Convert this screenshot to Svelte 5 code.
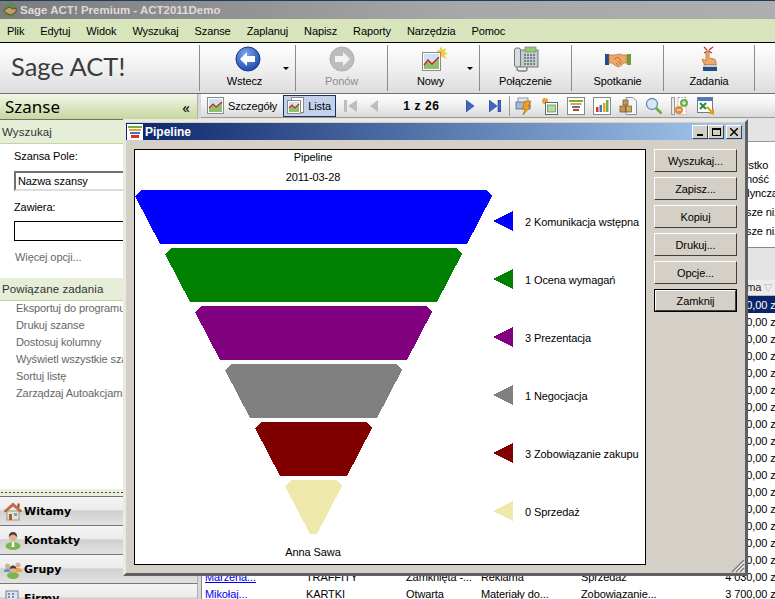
<script>
  const menu = ["Plik", "Edytuj", "Widok", "Wyszukaj", "Szanse", "Zaplanuj", "Napisz", "Raporty", "Narzędzia", "Pomoc"];
  const tasks = ["Eksportuj do programu", "Drukuj szanse", "Dostosuj kolumny", "Wyświetl wszystkie szanse", "Sortuj listę", "Zarządzaj Autoakcjami"];
  const dlgButtons = ["Wyszukaj...", "Zapisz...", "Kopiuj", "Drukuj...", "Opcje..."];

  // funnel stages, each band is 54px tall and narrows by 30px a side
  const stages = [
    { color: "#0000ff", label: "2 Komunikacja wstępna" },
    { color: "#008000", label: "1 Ocena wymagań" },
    { color: "#800080", label: "3 Prezentacja" },
    { color: "#808080", label: "1 Negocjacja" },
    { color: "#800000", label: "3 Zobowiązanie zakupu" },
    { color: "#eee8aa", label: "0 Sprzedaż" },
  ].map((s, i) => {
    const top = 40 + i * 58;
    const l = i * 30;
    const r = 357 - i * 30;
    const pts = [[l + 6, top], [r - 6, top], [r, top + 6], [r - 25, top + 54], [l + 25, top + 54], [l, top + 6]];
    return {
      ...s,
      points: pts.map((p) => p.join(",")).join(" "),
      y: top + 31,
      tri: `358,${top + 31} 378,${top + 21} 378,${top + 41}`,
    };
  });

  const amountRows = Array.from({ length: 16 }, (_, i) => i);
</script>

<div class="app">
  <div class="titlebar">
    <svg class="app-ico" width="16" height="16" viewBox="0 0 16 16">
      <circle cx="8" cy="8" r="7" fill="#5c8a5a" />
      <path d="M2 8 L7 5 L11 7 L14 6 L14 10 L9 13 L4 11 Z" fill="#c99a6a" stroke="#5a3a22" stroke-width=".8" />
    </svg>
    <span>Sage ACT! Premium - ACT2011Demo</span>
  </div>

  <nav class="menubar">
    {#each menu as m}<span>{m}</span>{/each}
  </nav>

  <div class="toolbar">
    <div class="logo"><span>Sage ACT!</span></div>
    <div class="tool has-drop wide">
      <svg width="26" height="26" viewBox="0 0 26 26">
        <defs>
          <radialGradient id="bl" cx=".4" cy=".3" r=".8"><stop offset="0" stop-color="#7fa8ec" /><stop offset="1" stop-color="#123fa8" /></radialGradient>
        </defs>
        <circle cx="13" cy="13" r="12" fill="url(#bl)" stroke="#1c3a88" />
        <path d="M5 13 L12 6 V10 H20 V16 H12 V20 Z" fill="#fff" />
      </svg>
      <span class="lbl">Wstecz</span><i class="drop"></i>
    </div>
    <div class="tool disabled">
      <svg width="26" height="26" viewBox="0 0 26 26">
        <circle cx="13" cy="13" r="12" fill="#bdbdbd" stroke="#adadad" />
        <path d="M21 13 L14 6 V10 H6 V16 H14 V20 Z" fill="#f2f2f2" />
      </svg>
      <span class="lbl">Ponów</span>
    </div>
    <div class="tool has-drop">
      <svg width="28" height="26" viewBox="0 0 28 26">
        <path d="M21 0 l1.500 4 4-2 -2 4 3.500 1.500 -3.500 1.500 2 4 -6-3 -4-5 3-1z" fill="#f4c93e" />
        <rect x="2.500" y="6.500" width="18" height="18" fill="#fff" stroke="#8a8a8a" />
        <rect x="4" y="8" width="15" height="15" fill="#cfe0f4" />
        <path d="M4 23 V19 L8 14 L12 18 L19 11 V23 Z" fill="#8dc06a" />
        <path d="M4 19 L8 14 L12 18 L19 11" fill="none" stroke="#d02020" stroke-width="1.300" />
      </svg>
      <span class="lbl">Nowy</span><i class="drop"></i>
    </div>
    <div class="tool">
      <svg width="26" height="26" viewBox="0 0 26 26">
        <rect x="7" y="4" width="18" height="17" fill="#c4ccd0" stroke="#707878" />
        <rect x="12" y="1" width="11" height="5" fill="#8fce6a" stroke="#707878" stroke-width=".6" />
        <rect x="1.500" y="2" width="6" height="19" rx="2" fill="#d8dcde" stroke="#707878" />
        <path d="M4 21 v2 q0 2 3 2 h5 q2 0 2-2 v-2" fill="none" stroke="#808080" stroke-width="1.400" />
        <path d="M11 9 h11 M11 12 h11 M11 15 h11 M11 18 h11" stroke="#606870" stroke-dasharray="2 1" stroke-width="1.500" />
      </svg>
      <span class="lbl">Połączenie</span>
    </div>
    <div class="tool">
      <svg width="26" height="26" viewBox="0 0 26 26">
        <rect x="0" y="8" width="4" height="11" fill="#1f4e8c" />
        <rect x="22" y="8" width="4" height="11" fill="#6f9a3e" />
        <path d="M4 9 L10 9 L14 8 L18 9 L22 9 V17 L19 17 L14 21 L11 20 L7 17 L4 17 Z" fill="#eda868" stroke="#b46a30" stroke-width=".7" />
        <path d="M9 13 l4-2 4 5 M11 17 l2 2 M13 15 l3 3" fill="none" stroke="#b46a30" stroke-width=".9" />
      </svg>
      <span class="lbl">Spotkanie</span>
    </div>
    <div class="tool">
      <svg width="26" height="26" viewBox="0 0 26 26">
        <path d="M11 4 L8 1 M13 4 L17 1 M12 5 L8 7 M12 5 L16 7" stroke="#c8282a" stroke-width="1.200" fill="none" />
        <path d="M10 5 h3 v7 l5 1 q2 .5 2 3 v3 H9 L6 14 l1-1 3 2 Z" fill="#eeaa66" stroke="#a8682e" stroke-width=".7" />
        <rect x="8" y="19" width="12" height="2" fill="#f0f0f0" stroke="#777" stroke-width=".5" />
        <rect x="7" y="21" width="14" height="4" fill="#1f4e8c" />
      </svg>
      <span class="lbl">Zadania</span>
    </div>
  </div>

  <div class="main">
    <aside class="side">
      <div class="side-head"><span>Szanse</span><b>«</b></div>
      <div class="sec-head">Wyszukaj</div>
      <div class="search">
        <label for="pole">Szansa Pole:</label>
        <div id="pole" class="select">Nazwa szansy</div>
        <label for="zaw">Zawiera:</label>
        <input id="zaw" class="input" />
        <span class="more">Więcej opcji...</span>
      </div>
      <div class="sec-head second">Powiązane zadania</div>
      <ul class="tasks">
        {#each tasks as t}<li>{t}</li>{/each}
      </ul>
      <div class="grip"></div>
      <div class="navs">
        <div class="nav">
          <svg width="20" height="20" viewBox="0 0 20 20">
            <path d="M1 10 L10 2 L19 10 L17 11 L10 5 L3 11 Z" fill="#c8733a" stroke="#8a4a20" stroke-width=".6" />
            <rect x="4" y="10" width="12" height="9" fill="#e8e2d0" stroke="#807868" stroke-width=".7" />
            <rect x="6" y="13" width="3" height="6" fill="#a0622e" />
            <rect x="11" y="12" width="3" height="3" fill="#7aa0cc" />
            <rect x="14.500" y="2.500" width="2" height="4" fill="#b83020" />
          </svg>
          <span>Witamy</span>
        </div>
        <div class="nav">
          <svg width="20" height="20" viewBox="0 0 20 20">
            <ellipse cx="10" cy="16" rx="7.500" ry="4" fill="#7ab648" />
            <circle cx="10" cy="7" r="4.200" fill="#e0b48c" />
            <path d="M5.800 7 Q6 2 10 2 Q14 2 14.200 7 Q12 4.500 10 4.500 Q8 4.500 5.800 7Z" fill="#4a4038" />
            <path d="M9 12 h2 l.5 5 h-3z" fill="#fff" />
          </svg>
          <span>Kontakty</span>
        </div>
        <div class="nav">
          <svg width="20" height="20" viewBox="0 0 20 20">
            <circle cx="4.500" cy="7" r="2.500" fill="#d8b090" />
            <path d="M1 13 q0-3.500 3.500-3.500 q3.500 0 3.500 3.500z" fill="#5f94d8" />
            <circle cx="15" cy="6" r="2.500" fill="#d8b090" />
            <path d="M11 13 q0-4 4-4 q4 0 4 4z" fill="#f0a040" />
            <ellipse cx="10" cy="16.500" rx="6" ry="3.500" fill="#7ab648" />
            <circle cx="10" cy="10" r="3.500" fill="#e0b48c" />
            <path d="M6.500 10 Q7 6.500 10 6.500 Q13 6.500 13.500 10 Q11 8.500 6.500 10Z" fill="#4a4038" />
          </svg>
          <span>Grupy</span>
        </div>
        <div class="nav">
          <svg width="20" height="20" viewBox="0 0 20 20">
            <rect x="3" y="3" width="12" height="14" fill="#dde4f0" stroke="#76808e" />
            <path d="M5 6h2M9 6h2M5 9h2M9 9h2M5 12h2M9 12h2" stroke="#5c7294" stroke-width="1.500" />
          </svg>
          <span>Firmy</span>
        </div>
      </div>
    </aside>

    <section class="content">
      <div class="subbar">
        <div class="sub-btn">
          <svg width="17" height="17" viewBox="0 0 17 17">
            <rect x=".5" y=".5" width="16" height="16" fill="#fff" stroke="#8a8a8a" />
            <rect x="2" y="2" width="13" height="13" fill="#cfe0f4" />
            <path d="M2 15 V11 L6 7 L9 10 L15 5 V15 Z" fill="#8dc06a" />
            <path d="M2 11 L6 7 L9 10 L15 5" fill="none" stroke="#d02020" stroke-width="1.200" />
          </svg>
          <span>Szczegóły</span>
        </div>
        <div class="sub-btn active">
          <svg width="17" height="17" viewBox="0 0 17 17">
            <rect x="4.500" y=".5" width="12" height="15" fill="#fff" stroke="#8a8a8a" />
            <rect x=".5" y="3.500" width="13" height="13" fill="#fff" stroke="#8a8a8a" />
            <rect x="2" y="5" width="10" height="10" fill="#cfe0f4" />
            <path d="M2 15 V11 L5 8 L8 11 L12 7 V15 Z" fill="#8dc06a" />
            <path d="M2 11 L5 8 L8 11 L12 7" fill="none" stroke="#d02020" stroke-width="1.200" />
          </svg>
          <span>Lista</span>
        </div>
        <div class="pager">
          <svg width="13" height="12" viewBox="0 0 13 12"><path d="M0 0h3v12H0zM13 0v12L4 6z" fill="#bdbdbd" /></svg>
          <svg class="prev" width="8" height="12" viewBox="0 0 8 12"><path d="M8 0v12L0 6z" fill="#bdbdbd" /></svg>
          <b>1 z 26</b>
          <svg class="next" width="8" height="12" viewBox="0 0 8 12"><path d="M0 0v12l8-6z" fill="#3d68c4" stroke="#1c3a88" stroke-width=".6" /></svg>
          <svg width="12" height="12" viewBox="0 0 12 12"><path d="M0 0v12l8-6zM9 0h3v12H9z" fill="#3d68c4" stroke="#1c3a88" stroke-width=".6" /></svg>
        </div>
        <div class="icons">
          <svg width="18" height="18" viewBox="0 0 18 18">
            <rect x="3" y="1" width="10" height="5" fill="#e4e8ee" stroke="#7a8494" stroke-width=".8" />
            <rect x="1" y="5" width="14" height="7" fill="#a8b8d0" stroke="#5a6a84" stroke-width=".8" />
            <path d="M10 4 h6 l-3 5 h3 l-8 9 2-6 h-3z" fill="#f0a020" stroke="#a06010" stroke-width=".6" />
          </svg>
          <svg width="18" height="18" viewBox="0 0 18 18">
            <circle cx="4" cy="4" r="3" fill="#f0a030" />
            <rect x="4.500" y="5.500" width="12" height="12" fill="#fff" stroke="#5a6a70" />
            <rect x="6.500" y="8" width="8" height="7" fill="#b8d8a0" stroke="#4a8a30" stroke-width=".7" />
          </svg>
          <svg width="18" height="18" viewBox="0 0 18 18">
            <rect x=".5" y=".5" width="17" height="17" fill="#fff" stroke="#8a8a8a" />
            <rect x="2" y="3" width="14" height="2" fill="#6fae4a" />
            <rect x="3.500" y="6" width="11" height="2" fill="#f0a020" />
            <rect x="5" y="9" width="8" height="2" fill="#3c78c8" />
            <rect x="6" y="12" width="6" height="2" fill="#e03020" />
          </svg>
          <svg width="18" height="18" viewBox="0 0 18 18">
            <rect x=".5" y=".5" width="17" height="17" fill="#fff" stroke="#8a8a8a" />
            <rect x="3" y="10" width="2.500" height="5" fill="#e03020" />
            <rect x="6.500" y="8" width="2.500" height="7" fill="#3c78c8" />
            <rect x="10" y="6" width="2.500" height="9" fill="#f0a020" />
            <rect x="13" y="3" width="2.500" height="12" fill="#6fae4a" />
          </svg>
          <svg width="18" height="18" viewBox="0 0 18 18">
            <path d="M7 .5h7l3.500 3.500v13.500H7z" fill="#f4f6fa" stroke="#8a94a8" />
            <rect x="4" y="3" width="5" height="5" fill="#c09a50" stroke="#705020" stroke-width=".7" />
            <rect x="1" y="9" width="5.500" height="6" fill="#c09a50" stroke="#705020" stroke-width=".7" />
            <rect x="7" y="9" width="5.500" height="6" fill="#d0aa60" stroke="#705020" stroke-width=".7" />
          </svg>
          <svg width="18" height="18" viewBox="0 0 18 18">
            <circle cx="7" cy="7" r="5.500" fill="#d6e8f8" stroke="#6a8ca8" stroke-width="1.300" />
            <path d="M11 11 l5.500 5.500" stroke="#6fae4a" stroke-width="2.800" />
          </svg>
          <svg width="18" height="18" viewBox="0 0 18 18">
            <rect x=".5" y=".5" width="3" height="17" fill="#e8e8e8" stroke="#9a9a9a" />
            <rect x="7" y=".5" width="8" height="17" fill="#fff" stroke="#b0b0b0" stroke-dasharray="2 1" />
            <circle cx="13" cy="6" r="4" fill="#6fae4a" />
            <path d="M11 6h4M13 4v4" stroke="#fff" />
            <circle cx="8" cy="13" r="4" fill="#e08a40" />
            <path d="M6 13h4" stroke="#fff" />
          </svg>
          <svg width="18" height="18" viewBox="0 0 18 18">
            <rect x=".5" y=".5" width="15" height="15" fill="#fff" stroke="#6a7a90" />
            <rect x="1" y="1" width="14" height="3" fill="#4a78c8" />
            <path d="M3 6 l6 6 M9 6 l-6 6" stroke="#2c8a3c" stroke-width="2" />
            <path d="M10 10 l6 6 v-4 M16 16 h-4" fill="none" stroke="#d8a010" stroke-width="2" />
          </svg>
        </div>
      </div>

      <div class="filters">
        <span>Wszystko</span>
        <span>Własność</span>
        <span>Pojedyncza</span>
        <span class="gap">Większe niż</span>
        <span class="gap">Większe niż</span>
      </div>
      <div class="grid-head"><span>Suma</span><i>▽</i></div>
      <div class="rows">
        {#each amountRows as r}
          <div class="row" class:selected={r === 0}>
            <span class="amount">1 000,00 zł</span>
          </div>
        {/each}
        <div class="row">
          <a href="#m">Marzena...</a><span class="c2">TRAFFITY</span><span class="c3">Zamknięta -...</span><span class="c4">Reklama</span><span class="c5">Sprzedaż</span><span class="amount">4 030,00 zł</span>
        </div>
        <div class="row">
          <a href="#k">Mikołaj...</a><span class="c2">KARTKI</span><span class="c3">Otwarta</span><span class="c4">Materiały do...</span><span class="c5">Zobowiązanie...</span><span class="amount">3 700,00 zł</span>
        </div>
      </div>
    </section>
  </div>

  <div class="dialog">
    <div class="dlg-title">
      <svg class="dlg-ico" width="16" height="16" viewBox="0 0 16 16">
        <rect width="16" height="16" fill="#fff" />
        <rect x="1" y="2" width="14" height="2" fill="#6fae4a" />
        <rect x="2" y="5" width="12" height="2" fill="#f0a020" />
        <rect x="3" y="8" width="10" height="2" fill="#3c78c8" />
        <rect x="4" y="11" width="8" height="3" fill="#e03020" />
      </svg>
      <span>Pipeline</span>
      <div class="ctl">
        <button aria-label="Minimalizuj"><i class="min"></i></button>
        <button aria-label="Maksymalizuj"><i class="max"></i></button>
        <button aria-label="Zamknij">
          <svg width="8" height="8" viewBox="0 0 8 8"><path d="M0 0L8 8M8 0L0 8" stroke="#000" stroke-width="1.500" /></svg>
        </button>
      </div>
    </div>
    <div class="dlg-body">
      <div class="chart">
        <svg width="510" height="414" viewBox="0 0 510 414">
          <text class="t" x="178" y="11" text-anchor="middle">Pipeline</text>
          <text class="t" x="178" y="31" text-anchor="middle">2011-03-28</text>
          {#each stages as s}
            <polygon points={s.points} fill={s.color} shape-rendering="crispEdges" />
            <polygon points={s.tri} fill={s.color} shape-rendering="crispEdges" />
            <text class="t" x="390" y={s.y + 5}>{s.label}</text>
          {/each}
          <text class="t" x="178" y="406" text-anchor="middle">Anna Sawa</text>
        </svg>
      </div>
      <div class="dlg-btns">
        {#each dlgButtons as b}<button class="dlg-btn">{b}</button>{/each}
        <button class="dlg-btn default">Zamknij</button>
      </div>
    </div>
    <svg class="resize" width="14" height="14" viewBox="0 0 14 14">
      <path d="M13 1L1 13M13 5L5 13M13 9L9 13" stroke="#808080" stroke-width="1.400" />
      <path d="M13 3L3 13M13 7L7 13M13 11L11 13" stroke="#fff" />
    </svg>
  </div>
</div>

<style>
  :global(body) {
    margin: 0;
  }
  .app {
    position: relative;
    width: 775px;
    height: 599px;
    overflow: hidden;
    display: flex;
    flex-direction: column;
    background: #fff;
    color: #000;
    font: 11px "Liberation Sans", sans-serif;
    letter-spacing: -.1px;
  }
  .titlebar {
    flex: 0 0 19px;
    display: flex;
    align-items: center;
    gap: 2px;
    padding-left: 2px;
    box-sizing: border-box;
    border-top: 1px solid #1d3b60;
    background: linear-gradient(90deg, #7c7c7c, #a8a8a8 60%, #aeaeae);
    color: #dcdcdc;
    font-size: 11.500px;
    font-weight: 700;
    letter-spacing: 0;
  }
  .menubar {
    flex: 0 0 23px;
    display: flex;
    align-items: center;
    gap: 16px;
    padding-left: 7px;
    background: #d8e4bc;
    border-bottom: 1px solid #000;
  }
  .toolbar {
    flex: 0 0 51px;
    display: flex;
    background: linear-gradient(#fff, #f0f0f0 50%, #dcdcdc);
    border-bottom: 1px solid #707070;
    box-sizing: border-box;
  }
  .logo {
    width: 199px;
    padding-left: 11px;
    box-sizing: border-box;
    font-family: Lato, sans-serif;
    font-size: 25.500px;
    letter-spacing: 0;
    color: #3c3c3c;
    line-height: 47px;
  }
  .tool {
    position: relative;
    width: 92px;
    margin: 2px 0;
    box-sizing: border-box;
    border-left: 1px solid #8c8c8c;
    display: flex;
    flex-direction: column;
    align-items: center;
    padding-top: 1px;
  }
  .tool.wide {
    width: 96px;
  }
  .tool:last-child {
    border-right: 1px solid #8c8c8c;
  }
  .tool svg {
    height: 26px;
    margin-bottom: 3px;
  }
  .has-drop .lbl {
    margin-right: 6px;
  }
  .disabled {
    color: #8c8c8c;
  }
  .drop {
    position: absolute;
    right: 6px;
    top: 22px;
    border: 3px solid transparent;
    border-top: 3px solid #000;
    border-bottom: 0;
  }
  .main {
    flex: 1;
    display: flex;
    min-height: 0;
    overflow: hidden;
  }
  .side {
    width: 197px;
    flex: none;
    display: flex;
    flex-direction: column;
    border-right: 1px solid #b0b0b0;
    box-sizing: content-box;
  }
  .side-head {
    flex: 0 0 26px;
    display: flex;
    align-items: center;
    justify-content: space-between;
    padding: 0 7px 0 5px;
    box-sizing: border-box;
    background: linear-gradient(#f2f6e8, #c6d8a0);
    border-bottom: 1px solid #707070;
    font-family: "Noto Sans", sans-serif;
    font-size: 17px;
    letter-spacing: 0;
  }
  .side-head b {
    font-weight: 400;
    font-size: 15px;
  }
  .sec-head {
    flex: 0 0 24px;
    min-height: 0;
    box-sizing: border-box;
    line-height: 25px;
    padding-left: 2px;
    background: #e6eed8;
    border-bottom: 1px solid #c3d69b;
    font-size: 11.500px;
    letter-spacing: .1px;
    color: #333;
  }
  .sec-head.second {
    flex: 0 0 23px;
    line-height: 23px;
  }
  .search {
    flex: 0 0 134px;
    box-sizing: border-box;
    display: flex;
    flex-direction: column;
    padding: 6px 0 0 14px;
    align-items: flex-start;
    line-height: 13px;
  }
  .select {
    width: 170px;
    height: 20px;
    margin: 8px 0 10px;
    box-sizing: border-box;
    border: 2px solid;
    border-color: #707070 #ddd #ddd #707070;
    padding-left: 2px;
    line-height: 17px;
  }
  .input {
    width: 170px;
    height: 20px;
    margin: 7px 0 10px;
    box-sizing: border-box;
    border: 1px solid #000;
  }
  .more,
  .tasks {
    color: #666;
  }
  .more {
    margin-left: 1px;
  }
  .tasks {
    list-style: none;
    margin: -1px 0 1px;
    padding: 0 0 0 16px;
    flex: 0 0 188px;
    line-height: 17px;
    white-space: nowrap;
    overflow: hidden;
  }
  .grip {
    flex: 0 0 7px;
    background: #eaf0de radial-gradient(circle, #445 0 1px, transparent 1px) 80px 1px / 4px 5px repeat-x;
    border-bottom: 1px solid #707070;
  }
  .navs {
    flex: none;
    display: flex;
    flex-direction: column;
  }
  .nav {
    flex: 0 0 29px;
    display: flex;
    align-items: center;
    gap: 1px;
    padding-left: 3px;
    box-sizing: border-box;
    border-bottom: 1px solid #777;
    background: linear-gradient(#f4f4f4, #ececec 45%, #d0d0d0 50%, #e2e2e2);
    font-family: "DejaVu Sans", sans-serif;
    font-size: 11px;
    font-weight: 700;
    letter-spacing: 0;
  }
  .content {
    flex: 1;
    min-width: 0;
    display: flex;
    flex-direction: column;
    border-left: 3px solid #d8d8d8;
    background: #e4e4e4;
  }
  .subbar {
    flex: 0 0 24px;
    display: flex;
    align-items: center;
    gap: 5px;
    padding-left: 5px;
    box-sizing: border-box;
    background: linear-gradient(#fff, #f0f0f0 50%, #dadada);
    border-bottom: 1px solid #999;
  }
  .sub-btn {
    flex: 0 0 70px;
    height: 22px;
    display: flex;
    align-items: center;
    gap: 4px;
    box-sizing: border-box;
    border: 1px solid transparent;
    white-space: nowrap;
  }
  .sub-btn.active {
    flex: 0 0 53px;
    background: #c3d2ea;
    border-color: #1c3064;
    padding-left: 3px;
  }
  .pager {
    display: flex;
    align-items: center;
    margin-left: 3px;
  }
  .pager .prev {
    margin: 0 25px 0 13px;
  }
  .pager .next {
    margin: 0 15px 0 24px;
  }
  .pager b {
    width: 39px;
    font-size: 12px;
    letter-spacing: .6px;
    white-space: nowrap;
  }
  .icons {
    display: flex;
    align-items: center;
    gap: 8px;
    margin-left: 3px;
    padding-left: 5px;
    height: 20px;
    border-left: 1px solid #999;
  }
  .filters {
    flex: 0 0 107px;
    box-sizing: border-box;
    margin-top: 23px;
    border-top: 1px solid #999;
    padding: 16px 0 0 521px;
    display: flex;
    flex-direction: column;
    white-space: nowrap;
    line-height: 14px;
    border-bottom: 1px solid #888;
    background: #fff;
  }
  .filters .gap {
    margin-top: 5px;
  }
  .grid-head {
    flex: 0 0 16px;
    box-sizing: border-box;
    margin-top: 32px;
    padding-left: 532px;
    display: flex;
    gap: 3px;
    white-space: nowrap;
    background: #ececec;
    border-bottom: 1px solid #bbb;
    color: #222;
    line-height: 15px;
  }
  .grid-head i {
    color: #bbb;
    font-style: normal;
  }
  .rows {
    border-left: 1px solid #888;
    flex: none;
  }
  .row {
    position: relative;
    height: 17px;
    display: flex;
    align-items: center;
    white-space: nowrap;
    padding-left: 3px;
    background: #fff;
  }
  .row a {
    flex: 0 0 101px;
    color: #0000ee;
  }
  .c2,
  .c4,
  .c5 {
    flex: 0 0 100px;
  }
  .c3 {
    flex: 0 0 75px;
  }
  .amount {
    margin-left: auto;
    margin-right: -3px;
  }
  .row.selected {
    background: #0a246a;
    color: #fff;
  }
  .dialog {
    position: absolute;
    left: 123px;
    top: 119px;
    width: 625px;
    height: 457px;
    box-sizing: border-box;
    display: flex;
    flex-direction: column;
    background: #d4d0c8;
    border: 3px solid;
    border-color: #ece9e0 #5f5f5f #5f5f5f #ece9e0;
    padding: 1px 1px 1px 0;
  }
  .dlg-title {
    flex: 0 0 17px;
    display: flex;
    align-items: center;
    gap: 2px;
    padding: 0 2px 0 1px;
    background: linear-gradient(90deg, #0a246a, #a6caf0);
    color: #fff;
    font-size: 12px;
    font-weight: 700;
    letter-spacing: 0;
  }
  .ctl {
    display: flex;
    margin-left: auto;
  }
  .ctl button {
    width: 16px;
    height: 14px;
    padding: 0;
    display: flex;
    align-items: center;
    justify-content: center;
    background: #d4d0c8;
    border: 1px solid;
    border-color: #fff #404040 #404040 #fff;
  }
  .ctl button:last-child {
    margin-left: 2px;
  }
  .min {
    width: 6px;
    height: 2px;
    margin-top: 7px;
    background: #000;
  }
  .max {
    width: 9px;
    height: 8px;
    box-sizing: border-box;
    border: 1px solid #000;
    border-top-width: 2px;
  }
  .dlg-body {
    flex: 1;
    display: flex;
    gap: 8px;
    padding: 9px 0 0 8px;
    align-items: flex-start;
  }
  .chart {
    width: 512px;
    height: 416px;
    box-sizing: border-box;
    border: 1px solid #000;
    background: #fff;
  }
  .chart svg {
    display: block;
  }
  .t {
    font: 11px "Liberation Sans", sans-serif;
    fill: #000;
  }
  .dlg-btns {
    display: flex;
    flex-direction: column;
    gap: 5px;
    width: 83px;
  }
  .dlg-btn {
    height: 23px;
    padding: 0;
    background: #d4d0c8;
    border: 1px solid;
    border-color: #fff #404040 #404040 #fff;
    font: 11px "Liberation Sans", sans-serif;
    letter-spacing: -.1px;
    color: #000;
  }
  .dlg-btn.default {
    outline: 1px solid #000;
    outline-offset: -1px;
    border-width: 2px;
  }
  .resize {
    position: absolute;
    right: 0;
    bottom: 0;
  }
</style>
